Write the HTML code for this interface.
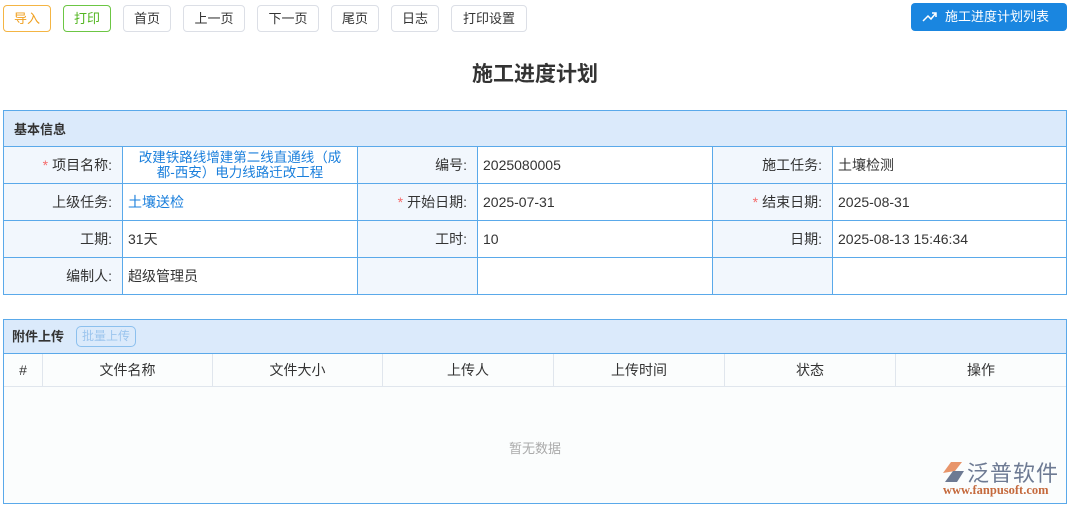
<!DOCTYPE html><html><head><meta charset="utf-8"><style>
*{box-sizing:border-box;margin:0;padding:0}
body{width:1070px;height:505px;background:#fff;font-family:"Liberation Sans","Noto Sans CJK SC",sans-serif;position:relative;overflow:hidden;color:#333}
.btn{position:absolute;top:5px;height:27px;border:1px solid #dcdfe6;border-radius:4px;font-size:13px;line-height:25px;text-align:center;color:#333;background:#fff}
.abs{position:absolute}
.cell{position:absolute;border-right:1px solid #5aa9ea;border-bottom:1px solid #5aa9ea;font-size:14px;display:flex;align-items:center;padding:0 5px}
.lab{background:#f2f7fd;justify-content:flex-end;padding-right:10px}
.req{color:#f56c6c;margin-right:4px}
.blue{color:#1a7fdc}
.th{position:absolute;top:354px;height:32px;border-right:1px solid #e0e6ed;font-size:14px;line-height:32px;text-align:center;color:#333}
</style></head><body>
<div class="btn" style="left:3px;width:48px;border-color:#f4b544;color:#f0a020">导入</div>
<div class="btn" style="left:63px;width:48px;border-color:#6cc644;color:#52b520">打印</div>
<div class="btn" style="left:123px;width:48px">首页</div>
<div class="btn" style="left:183px;width:62px">上一页</div>
<div class="btn" style="left:257px;width:62px">下一页</div>
<div class="btn" style="left:331px;width:48px">尾页</div>
<div class="btn" style="left:391px;width:48px">日志</div>
<div class="btn" style="left:451px;width:76px">打印设置</div>
<div class="abs" style="left:911px;top:3px;width:156px;height:28px;background:#1a86e0;border-radius:4px;color:#fff;font-size:13px;line-height:28px;padding-left:34px">施工进度计划列表
<svg class="abs" style="left:11px;top:8px" width="16" height="12" viewBox="0 0 16 12"><path d="M1 10 L6 5 L9 8 L14 2 M10 2 H14 V6" fill="none" stroke="#fff" stroke-width="1.5"/></svg></div>
<div class="abs" style="left:0;width:1070px;top:58px;text-align:center;font-size:21px;font-weight:bold;color:#333">施工进度计划</div>

<div class="cell" style="left:3px;top:110px;width:1064px;height:37px;background:#dbeafb;font-weight:bold;font-size:13px;padding-left:10px;border-left:1px solid #5aa9ea;border-top:1px solid #5aa9ea">基本信息</div>

<div class="cell lab" style="left:3px;top:147px;width:120px;height:37px;border-left:1px solid #5aa9ea"><span class="req">*</span>项目名称:</div>
<div class="cell blue" style="left:123px;top:147px;width:235px;height:37px;justify-content:center;text-align:center;line-height:15px;font-size:13.5px;padding:0 10px">改建铁路线增建第二线直通线（成都-西安）电力线路迁改工程</div>
<div class="cell lab" style="left:358px;top:147px;width:120px;height:37px">编号:</div>
<div class="cell" style="left:478px;top:147px;width:235px;height:37px">2025080005</div>
<div class="cell lab" style="left:713px;top:147px;width:120px;height:37px">施工任务:</div>
<div class="cell" style="left:833px;top:147px;width:234px;height:37px">土壤检测</div>

<div class="cell lab" style="left:3px;top:184px;width:120px;height:37px;border-left:1px solid #5aa9ea">上级任务:</div>
<div class="cell blue" style="left:123px;top:184px;width:235px;height:37px">土壤送检</div>
<div class="cell lab" style="left:358px;top:184px;width:120px;height:37px"><span class="req">*</span>开始日期:</div>
<div class="cell" style="left:478px;top:184px;width:235px;height:37px">2025-07-31</div>
<div class="cell lab" style="left:713px;top:184px;width:120px;height:37px"><span class="req">*</span>结束日期:</div>
<div class="cell" style="left:833px;top:184px;width:234px;height:37px">2025-08-31</div>

<div class="cell lab" style="left:3px;top:221px;width:120px;height:37px;border-left:1px solid #5aa9ea">工期:</div>
<div class="cell" style="left:123px;top:221px;width:235px;height:37px">31天</div>
<div class="cell lab" style="left:358px;top:221px;width:120px;height:37px">工时:</div>
<div class="cell" style="left:478px;top:221px;width:235px;height:37px">10</div>
<div class="cell lab" style="left:713px;top:221px;width:120px;height:37px">日期:</div>
<div class="cell" style="left:833px;top:221px;width:234px;height:37px">2025-08-13 15:46:34</div>

<div class="cell lab" style="left:3px;top:258px;width:120px;height:37px;border-left:1px solid #5aa9ea">编制人:</div>
<div class="cell" style="left:123px;top:258px;width:235px;height:37px">超级管理员</div>
<div class="cell lab" style="left:358px;top:258px;width:120px;height:37px"></div>
<div class="cell" style="left:478px;top:258px;width:235px;height:37px"></div>
<div class="cell lab" style="left:713px;top:258px;width:120px;height:37px"></div>
<div class="cell" style="left:833px;top:258px;width:234px;height:37px"></div>

<div class="abs" style="left:3px;top:319px;width:1064px;height:185px;border:1px solid #5aa9ea;background:#fbfdfd"></div>
<div class="abs" style="left:4px;top:320px;width:1062px;height:34px;background:#dbeafb;border-bottom:1px solid #5aa9ea"></div>
<div class="abs" style="left:12px;top:328px;font-size:13px;font-weight:bold;line-height:18px">附件上传</div>
<div class="abs" style="left:76px;top:326px;width:60px;height:21px;border:1px solid #8cc0ee;border-radius:5px;color:#9cc5ee;font-size:12px;line-height:19px;text-align:center">批量上传</div>
<div class="th" style="left:4px;width:39px">#</div>
<div class="th" style="left:43px;width:170px">文件名称</div>
<div class="th" style="left:213px;width:170px">文件大小</div>
<div class="th" style="left:383px;width:171px">上传人</div>
<div class="th" style="left:554px;width:171px">上传时间</div>
<div class="th" style="left:725px;width:171px">状态</div>
<div class="th" style="left:896px;width:170px;border-right:none">操作</div>
<div class="abs" style="left:4px;top:386px;width:1062px;height:1px;background:#e0e6ed"></div>
<div class="abs" style="left:0;width:1070px;top:438px;text-align:center;font-size:13px;color:#aaa">暂无数据</div>

<svg class="abs" style="left:941px;top:461px" width="25" height="22" viewBox="0 0 25 22"><path d="M2 12 L10 1 L21 1 L14 10 Z" fill="#e8956a"/><path d="M4 21 L12 10 L23 10 L16 21 Z" fill="#6d7a93"/></svg>
<div class="abs" style="left:967px;top:456px;font-size:22px;color:#6d7a93;letter-spacing:1px">泛普软件</div>
<div class="abs" style="left:943px;top:483px;font-size:12.5px;color:#c56a3d;font-family:'Liberation Serif',serif;font-weight:bold">www.fanpusoft.com</div>
</body></html>
